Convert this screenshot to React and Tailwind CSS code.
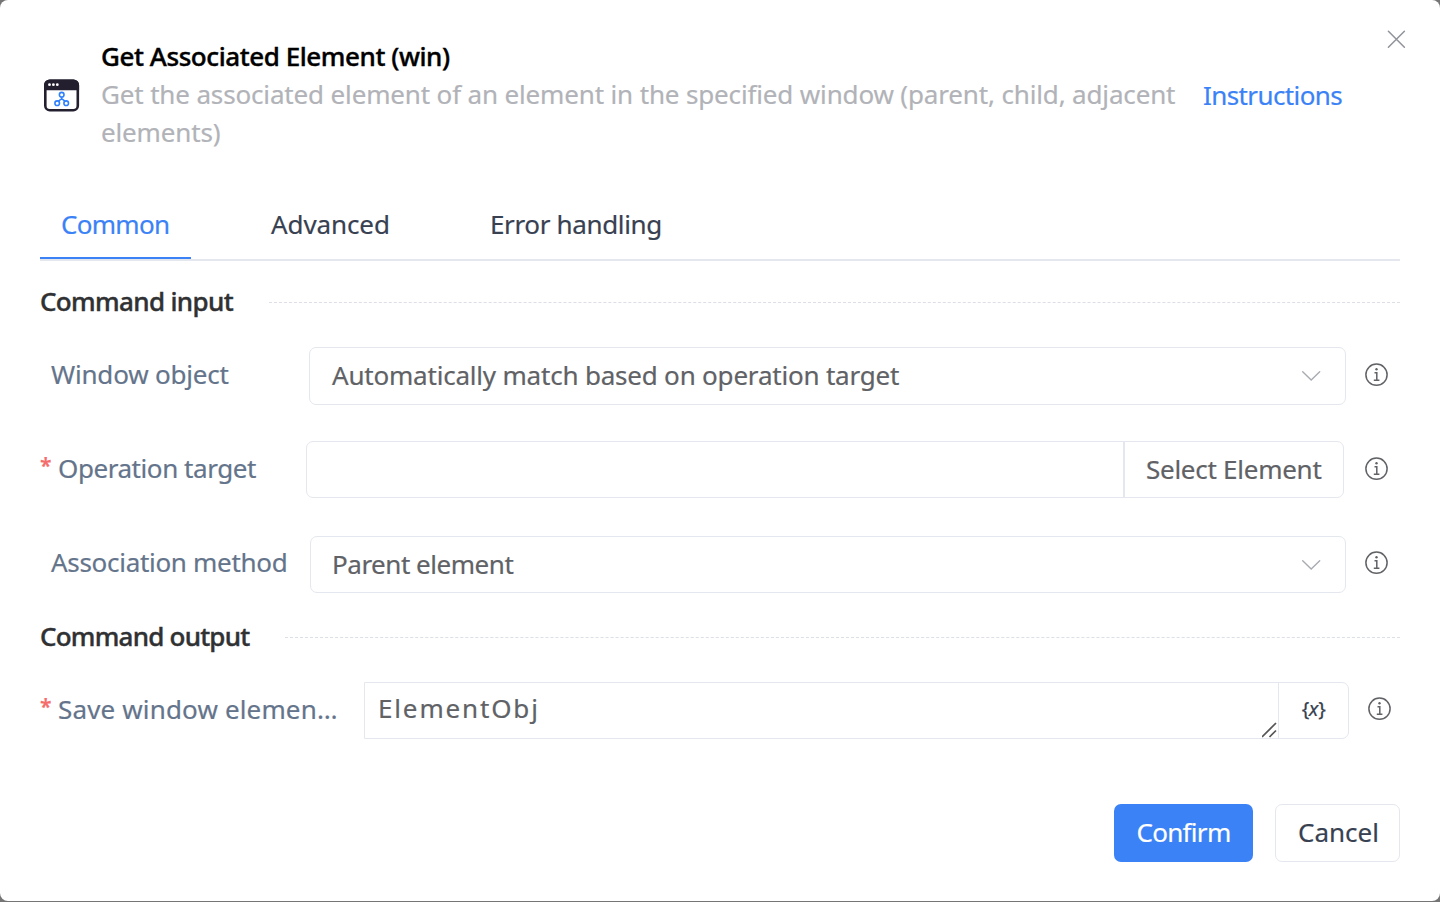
import React from "react";

function InfoIcon() {
  return (
    <svg className="h-6 w-6 shrink-0 text-[#606266]" viewBox="0 0 24 24" fill="none" stroke="currentColor" strokeWidth="1.5">
      <circle cx="11.500" cy="11.700" r="10.600" />
      <path d="M9.500 9.800h2.300v7M8.800 17.200h5.600" />
      <circle cx="11.500" cy="6.200" r="1.200" fill="currentColor" stroke="none" />
    </svg>
  );
}

function Chevron() {
  return (
    <svg className="h-5 w-5 shrink-0" viewBox="0 0 20 20" fill="none" stroke="#a8abb2" strokeWidth="1.4" strokeLinecap="round">
      <path d="M1.700 5.700 10.200 14l8.500-8.300" />
    </svg>
  );
}

function CloseIcon() {
  return (
    <svg className="h-5 w-5 shrink-0" viewBox="0 0 20 20" fill="none" stroke="#909399" strokeWidth="1.500" strokeLinecap="round">
      <path d="M2.400 2.200l16 16M18.400 2.200l-16 16" />
    </svg>
  );
}

function WindowIcon() {
  return (
    <svg className="h-9 w-9 shrink-0" viewBox="0 0 36 36" fill="none">
      <rect x="1.300" y="2.800" width="32.500" height="29.400" rx="4.500" fill="#fff" stroke="#231f2e" strokeWidth="2.600" />
      <path d="M0 12.300V7a5.600 5.600 0 0 1 5.600-5.600h24A5.600 5.600 0 0 1 35.100 7v5.300z" fill="#231f2e" />
      <circle cx="5.500" cy="6.700" r="1.400" fill="#fff" />
      <circle cx="9.400" cy="6.700" r="1.400" fill="#fff" />
      <circle cx="13.300" cy="6.700" r="1.400" fill="#fff" />
      <g stroke="#2f80ff" strokeWidth="1.600">
        <circle cx="17.700" cy="16.700" r="2.300" />
        <circle cx="13.200" cy="25.200" r="2.300" />
        <circle cx="22.200" cy="25.200" r="2.300" />
        <path d="M17.700 19v2.200M14.500 23.200l3.200-2.500 3.200 2.500" />
      </g>
    </svg>
  );
}

function Section({ children, className }) {
  return (
    <div className={"flex h-10 items-center " + className}>
      <h2 className="-mt-0.5 whitespace-nowrap font-medium text-[#303133] [-webkit-text-stroke:0.4px]">{children}</h2>
      <div className="ml-9 flex-1 border-t border-dashed border-[#dcdfe6]" />
    </div>
  );
}

function Star() {
  return <span className="-mt-[3px] mb-[3px] w-[18px] shrink-0 text-[21px] font-semibold tracking-normal text-[#f56c6c]">*</span>;
}

export default function App() {
  return (
    <div className="h-[902px] w-[1440px] overflow-hidden bg-[#757575] font-['Noto_Sans',sans-serif] text-[26px] leading-[38px] text-[#606266] [-webkit-text-stroke:0.2px]">
      <main className="flex h-[901px] flex-col rounded-lg bg-white px-10">
        <header className="flex h-[149px] pt-[37px]">
          <div className="w-[61px] shrink-0 pl-1 pt-[41px]"><WindowIcon /></div>
          <div className="w-[1102px] shrink-0">
            <h1 className="font-medium tracking-[-0.43px] text-black [-webkit-text-stroke:0.4px]">Get Associated Element (win)</h1>
            <p className="w-[1085px] tracking-[-0.15px] text-[#b1b3b8]">Get the associated element of an element in the specified window (parent, child, adjacent elements)</p>
          </div>
          <a className="w-[182px] shrink-0 pt-[39px] tracking-[-0.6px] text-[#3b82f6]">Instructions</a>
          <button className="-mt-2 flex h-5 items-start pl-px"><CloseIcon /></button>
        </header>

        <nav className="mt-[41px] flex h-[71px] items-stretch border-b-2 border-[#e4e7ed] text-[#374151]">
          <span className="w-[151px] border-b-2 border-[#3b82f6] pl-[21px] pt-[15px] tracking-[-0.7px] text-[#3b82f6]">Common</span>
          <span className="w-[299px] pl-[80px] pt-[15px] tracking-[-0.1px]">Advanced</span>
          <span className="pt-[15px] tracking-[-0.35px]">Error handling</span>
        </nav>

        <Section className="mt-[21px] tracking-[-0.65px]">Command input</Section>

        <div className="mt-[25px] flex h-[58px] items-center">
          <label className="-mt-1 w-[269px] pl-[11px] tracking-[-0.2px] text-[#64748b]">Window object</label>
          <div className="flex h-[58px] w-[1037px] items-center justify-between rounded-[7px] border border-[#e4e7ed] pl-[22px] pr-[24px]">
            <span className="-mt-0.5 tracking-[-0.2px]">Automatically match based on operation target</span>
            <Chevron />
          </div>
          <span className="-mt-[3px] ml-[19px]"><InfoIcon /></span>
        </div>

        <div className="mt-9 flex h-[57px] items-center">
          <label className="-mt-[3px] flex w-[266px] tracking-[-0.43px] text-[#64748b]"><Star />Operation target</label>
          <div className="flex h-[57px] w-[1038px] rounded-[7px] border border-[#e4e7ed]">
            <span className="flex-1" />
            <button className="flex w-[220px] items-center border-l-2 border-[#e4e7ed] pb-0.5 pl-[21px] tracking-[-0.26px]">Select Element</button>
          </div>
          <span className="-mt-[2px] ml-[21px]"><InfoIcon /></span>
        </div>

        <div className="mt-[38px] flex h-[57px] items-center">
          <label className="-mt-[5px] w-[270px] pl-[11px] tracking-[-0.3px] text-[#64748b]">Association method</label>
          <div className="flex h-[57px] w-[1036px] items-center justify-between rounded-[7px] border border-[#e4e7ed] pl-[21px] pr-[24px]">
            <span className="-mt-0.5 tracking-[-0.47px]">Parent element</span>
            <Chevron />
          </div>
          <span className="-mt-[4px] ml-[19px]"><InfoIcon /></span>
        </div>

        <Section className="mt-6 tracking-[-0.77px]">Command output</Section>

        <div className="mt-[25px] flex h-[57px] items-center">
          <label className="-mt-[3px] flex w-[324px] whitespace-nowrap tracking-[0.15px] text-[#64748b]"><Star />Save window elemen<span className="tracking-[1px]">…</span></label>
          <div className="flex h-[57px] w-[985px] rounded-r-[7px] border border-[#e4e7ed]">
            <div className="flex flex-1 items-end justify-between pl-[13px]">
              <span className="self-center pb-1.5 tracking-[1.850px]">ElementObj</span>
              <svg className="h-4 w-4" viewBox="0 0 16 16" fill="none" stroke="#555" strokeWidth="1.700">
                <path d="M0 15 14 1M7.500 15l6.500-6.500" />
              </svg>
            </div>
            <button className="flex w-[70px] items-center justify-center border-l border-[#e4e7ed] pb-1 text-[20px] tracking-[-0.4px] text-[#374151]">{"{"}<i>x</i>{"}"}</button>
          </div>
          <span className="-mt-[3px] ml-[19px]"><InfoIcon /></span>
        </div>

        <footer className="mt-[65px] flex h-[58px] justify-end gap-[22px]">
          <button className="w-[139px] rounded-[7px] bg-[#3b82f6] pb-0.5 tracking-[-0.7px] text-white">Confirm</button>
          <button className="w-[125px] rounded-[7px] border border-[#e4e7ed] pb-0.5 pl-0.5 text-[#374151]">Cancel</button>
        </footer>
      </main>
    </div>
  );
}
